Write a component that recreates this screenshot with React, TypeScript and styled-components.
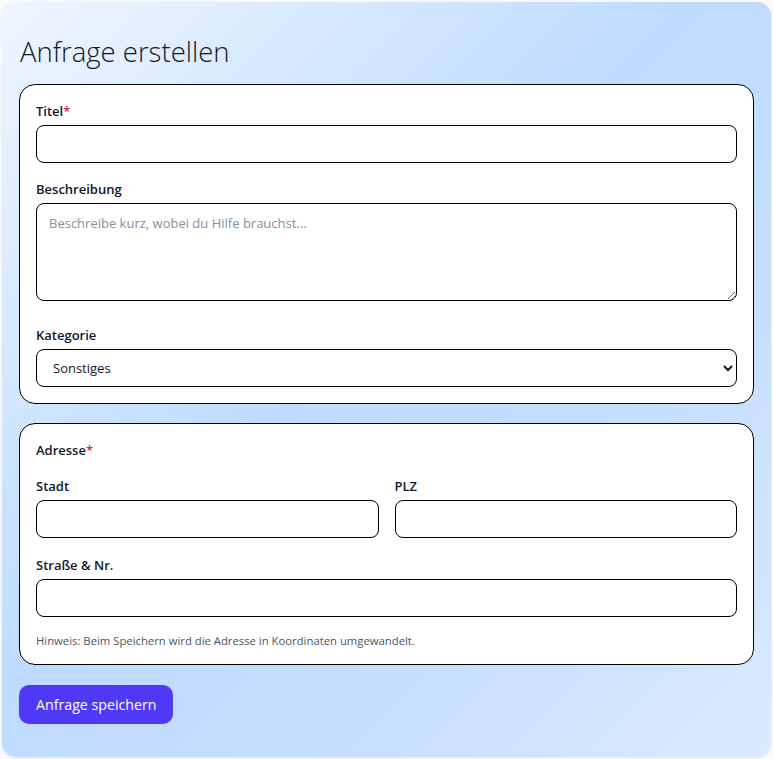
import styled, { createGlobalStyle } from 'styled-components'

const Global = createGlobalStyle`
  html, body { margin:0; padding:0; background:#f8fafc; }
  body { font-family: "Open Sans", "Noto Sans", sans-serif; color:#111827; }
  * { box-sizing:border-box; }
`

const Card = styled.div`
  margin:2px; width:769px; min-height:755px;
  border-radius:14px; padding:17px 17px 32px;
  background:linear-gradient(135deg, #eff6ff 0%, #bedbff 45%, #c6deff 70%, #dbeafe 100%);
  box-shadow:0 1px 3px rgba(0,0,0,.08);
  display:flex; flex-direction:column;
`
const Title = styled.h1`
  margin:15px 0 14px 1px; font-size:27.5px; font-weight:300; line-height:36px; color:#111827;
`
const Section = styled.section<{ gap: number }>`
  background:#fff; border:1px solid #000; border-radius:16px;
  padding:17px 16px 16px; display:flex; flex-direction:column; gap:${p => p.gap}px;
  & + & { margin-top:19px; padding-bottom:15px; }
`
const Field = styled.div`display:flex; flex-direction:column; gap:5px; flex:1;`
const Label = styled.label`font-size:13px; font-weight:600; line-height:18px; color:#111827;`
const Req = styled.span`color:#e11d48;`
const Input = styled.input`
  height:38px; border:1px solid #000; border-radius:8px; padding:0 12px;
  font:inherit; font-size:14px; background:#fff;
`
const Area = styled.textarea`
  height:98px; margin-bottom:8px; border:1px solid #000; border-radius:8px; padding:10px 12px;
  font:inherit; font-size:13px; resize:vertical;
  &::placeholder { color:#8a8f98; }
`
const Select = styled.select`
  height:38px; border:1px solid #000; border-radius:8px; padding:0 8px 0 12px;
  font:inherit; font-size:13px; background:#fff; color:#111827;
`
const Row = styled.div`display:flex; gap:16px;`
const Hint = styled.p`margin:-2px 0 0; font-size:11.3px; color:#4b5563; line-height:16px;`
const Save = styled.button`
  align-self:flex-start; margin-top:20px; height:39px; padding:0 17px;
  background:#4f39f6; color:#fff; border:none; border-radius:10px;
  font:inherit; font-size:14.2px; font-weight:400; cursor:pointer;
`

export default function App() {
  return (
    <>
      <Global />
      <Card>
        <Title>Anfrage erstellen</Title>
        <Section gap={17}>
          <Field>
            <Label>Titel<Req>*</Req></Label>
            <Input />
          </Field>
          <Field>
            <Label>Beschreibung</Label>
            <Area placeholder="Beschreibe kurz, wobei du Hilfe brauchst..." />
          </Field>
          <Field>
            <Label>Kategorie</Label>
            <Select defaultValue="Sonstiges">
              <option>Sonstiges</option>
              <option>Einkauf</option>
              <option>Haushalt</option>
            </Select>
          </Field>
        </Section>
        <Section gap={18}>
          <Label>Adresse<Req>*</Req></Label>
          <Row>
            <Field>
              <Label>Stadt</Label>
              <Input />
            </Field>
            <Field>
              <Label>PLZ</Label>
              <Input />
            </Field>
          </Row>
          <Field>
            <Label>Straße &amp; Nr.</Label>
            <Input />
          </Field>
          <Hint>Hinweis: Beim Speichern wird die Adresse in Koordinaten umgewandelt.</Hint>
        </Section>
        <Save>Anfrage speichern</Save>
      </Card>
    </>
  )
}
